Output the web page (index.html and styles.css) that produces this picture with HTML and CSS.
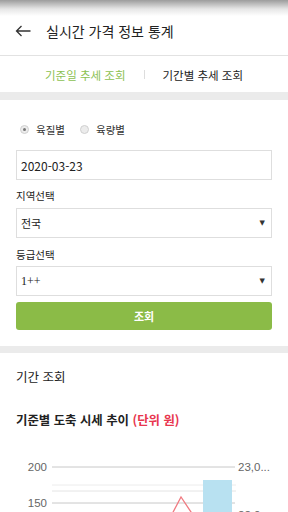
FILE: index.html
```html
<!DOCTYPE html>
<html lang="ko">
<head>
<meta charset="utf-8">
<link rel="stylesheet" href="styles.css">
</head>
<body>
<header class="appbar">
  <svg class="back" width="16" height="12" viewBox="0 0 16 12"><path d="M15.5 6H1.5M6.5 1L1.5 6l5 5" fill="none" stroke="#333" stroke-width="1.3"/></svg>
  <h1 class="title">실시간 가격 정보 통계</h1>
</header>
<nav class="tabs">
  <span class="tab active">기준일 추세 조회</span>
  <span class="sep"></span>
  <span class="tab">기간별 추세 조회</span>
</nav>
<div class="band"></div>
<section class="form">
  <div class="radios">
    <label class="radio"><span class="dot checked"></span>육질별</label>
    <label class="radio"><span class="dot"></span>육량별</label>
  </div>
  <div class="field date">2020-03-23</div>
  <div class="label first">지역선택</div>
  <div class="field select"><span>전국</span><span class="arrow">▼</span></div>
  <div class="label">등급선택</div>
  <div class="field select serif"><span>1++</span><span class="arrow">▼</span></div>
  <button class="btn">조회</button>
</section>
<div class="band thin"></div>
<section class="result">
  <div class="sub">기간 조회</div>
  <div class="chart-title">기준별 도축 시세 추이 <span class="unit">(단위 원)</span></div>
  <svg class="chart" width="288" height="90" viewBox="0 0 288 90">
    <line x1="52" y1="37" x2="235" y2="37" stroke="#c8c8c8" stroke-width="1"/>
    <line x1="52" y1="55" x2="236" y2="55" stroke="#ececec" stroke-width="1"/>
    <line x1="52" y1="61" x2="236" y2="61" stroke="#e4e4e4" stroke-width="1"/>
    <line x1="52" y1="73" x2="235" y2="73" stroke="#c8c8c8" stroke-width="1"/>
    <rect x="203" y="50" width="29" height="50" fill="#b8e1f1"/>
    <polyline points="170,88 181,67 195,88" fill="none" stroke="#f07a80" stroke-width="1.3"/>
    <text x="47" y="41" text-anchor="end" class="ax">200</text>
    <text x="47" y="77" text-anchor="end" class="ax">150</text>
    <text x="238" y="41" class="ax">23,0...</text>
    <text x="238" y="89" class="ax">22,0...</text>
  </svg>
</section>
</body>
</html>
```
FILE: styles.css
```css
* { box-sizing: border-box; }
html, body { margin: 0; padding: 0; background: #fff; }
body {
  width: 288px;
  height: 512px;
  overflow: hidden;
  font-family: "Noto Sans CJK KR", "Noto Sans", sans-serif;
  color: #222;
}
.appbar {
  height: 56px;
  padding-top: 7px;
  display: flex;
  align-items: center;
  border-bottom: 1px solid #e2e2e2;
  background: linear-gradient(#9c9c9c 0px, #e6e6e6 9px, #fff 16px);
}
.back { margin-left: 15px; margin-right: 15px; }
.title {
  margin: 0;
  font-size: 14px;
  font-weight: 400;
  color: #222;
}
.tabs {
  height: 36px;
  display: flex;
  align-items: center;
  justify-content: center;
  gap: 18px;
  font-size: 11.5px;
  padding-top: 1px;
}
.tab { color: #222; }
.tab.active { color: #8cc152; }
.sep { width: 1px; height: 9px; background: #ddd; }
.band { height: 8px; background: #ebebeb; }
.band.thin { height: 7px; margin-top: 16px; }
.form { padding: 0 16px; display: flex; flex-direction: column; }
.radios {
  margin-top: 20px;
  height: 18px;
  display: flex;
  align-items: center;
  gap: 15px;
  padding-left: 4px;
  font-size: 10.5px;
  color: #333;
}
.radio { display: flex; align-items: center; gap: 7px; }
.dot {
  width: 9px; height: 9px;
  border-radius: 50%;
  border: 1px solid #d0d0d0;
  background: #ececec;
  display: inline-block;
  position: relative;
}
.dot.checked::after {
  content: "";
  position: absolute;
  left: 2px; top: 2px;
  width: 3px; height: 3px;
  border-radius: 50%;
  background: #777;
}
.field {
  height: 30px;
  border: 1px solid #dedede;
  display: flex;
  align-items: center;
  padding: 0 4px;
  font-size: 11px;
  color: #222;
}
.date { margin-top: 12px; font-size: 12px; }
.select { justify-content: space-between; padding-right: 6px; }
.serif { font-family: "Liberation Serif", "Noto Sans CJK KR", serif; font-size: 12px; }
.arrow { font-size: 7px; color: #333; font-family: "DejaVu Sans", sans-serif; }
.label {
  height: 16px;
  line-height: 16px;
  margin-top: 9px;
  margin-bottom: 3px;
  font-size: 10.5px;
  color: #222;
}
.label.first { margin-top: 8px; margin-bottom: 4px; }
.btn {
  margin-top: 6px;
  height: 28px;
  border: none;
  border-radius: 3px;
  background: #8bbb47;
  color: #fff;
  font-family: "Noto Sans CJK KR", sans-serif;
  font-size: 11px;
  font-weight: 700;
  padding: 0;
}
.result { padding-top: 14px; }
.sub {
  height: 20px;
  line-height: 20px;
  padding-left: 16px;
  font-size: 12.5px;
  color: #222;
}
.chart-title {
  margin-top: 23px;
  height: 20px;
  line-height: 20px;
  padding-left: 16px;
  font-size: 12.4px;
  font-weight: 700;
  color: #222;
}
.unit { color: #e8364e; }
.chart { display: block; }
.ax { font-family: "Liberation Sans", sans-serif; font-size: 11.5px; fill: #666; }
```
